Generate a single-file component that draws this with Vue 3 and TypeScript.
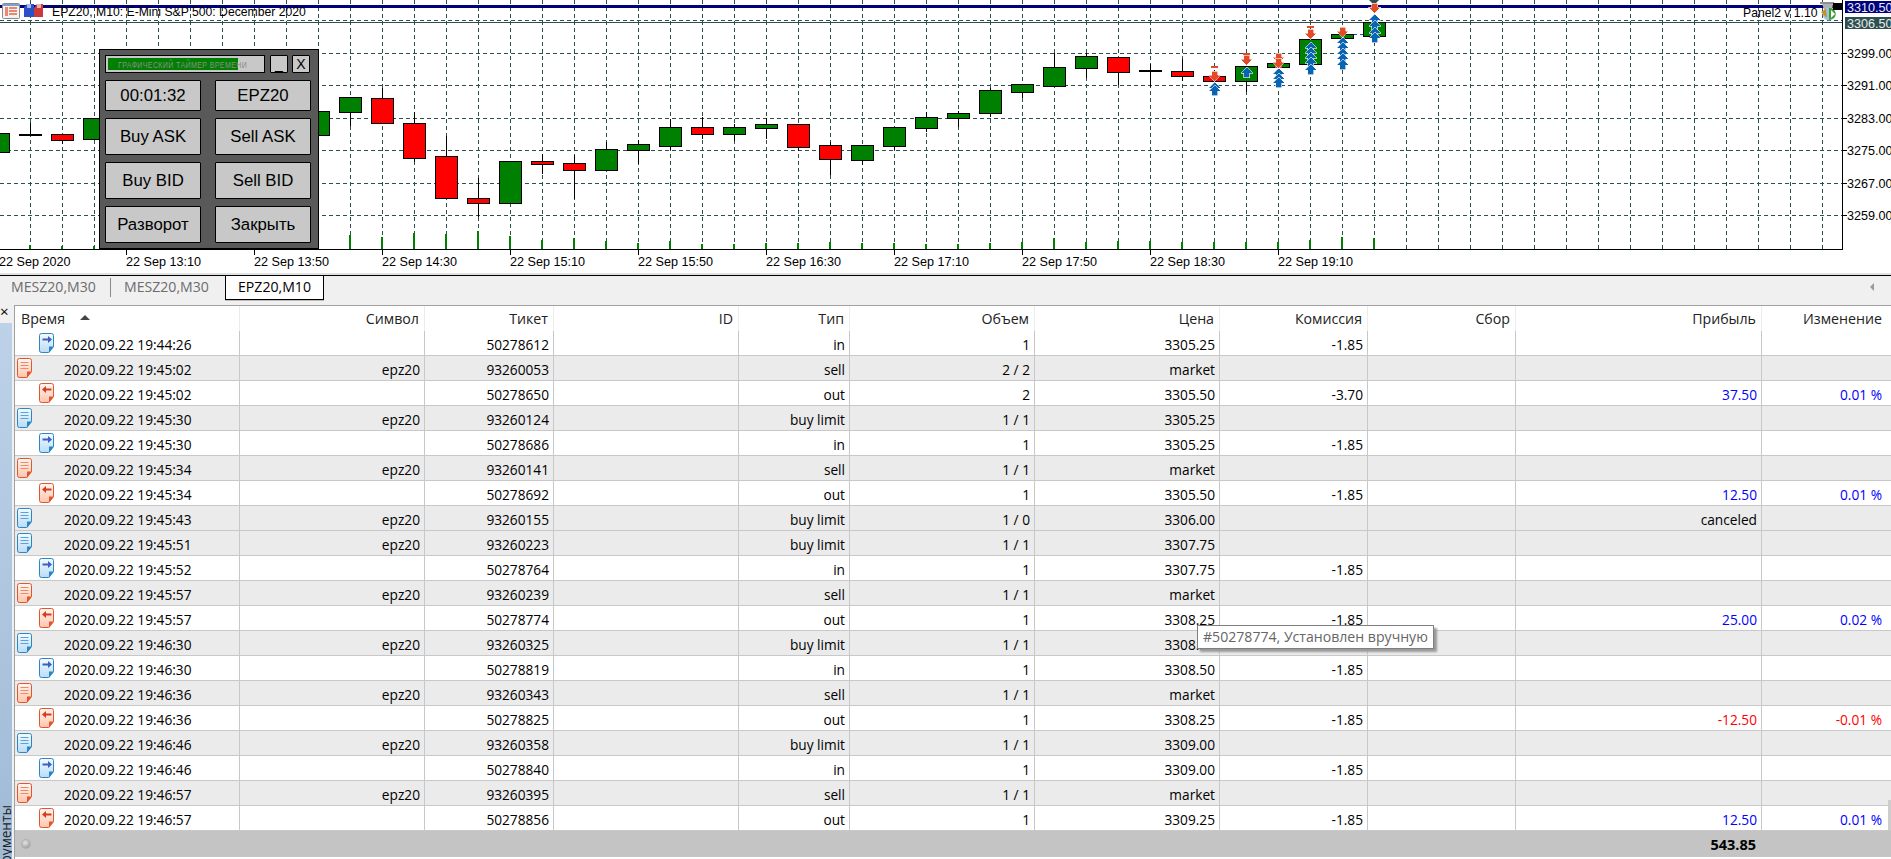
<script setup lang="ts">
type Row = {
  kind: 'in' | 'out' | 'buy' | 'sell'
  time: string
  sym?: string
  ticket: string
  type: string
  vol: string
  price: string
  fee?: string
  profit?: string
  change?: string
  tone?: 'pos' | 'neg'
}

const columns = ['Символ', 'Тикет', 'ID', 'Тип', 'Объем', 'Цена', 'Комиссия', 'Сбор', 'Прибыль', 'Изменение']

const rows: Row[] = [
  { kind: 'in', time: '19:44:26', ticket: '50278612', type: 'in', vol: '1', price: '3305.25', fee: '-1.85' },
  { kind: 'sell', time: '19:45:02', sym: 'epz20', ticket: '93260053', type: 'sell', vol: '2 / 2', price: 'market' },
  { kind: 'out', time: '19:45:02', ticket: '50278650', type: 'out', vol: '2', price: '3305.50', fee: '-3.70', profit: '37.50', change: '0.01 %', tone: 'pos' },
  { kind: 'buy', time: '19:45:30', sym: 'epz20', ticket: '93260124', type: 'buy limit', vol: '1 / 1', price: '3305.25' },
  { kind: 'in', time: '19:45:30', ticket: '50278686', type: 'in', vol: '1', price: '3305.25', fee: '-1.85' },
  { kind: 'sell', time: '19:45:34', sym: 'epz20', ticket: '93260141', type: 'sell', vol: '1 / 1', price: 'market' },
  { kind: 'out', time: '19:45:34', ticket: '50278692', type: 'out', vol: '1', price: '3305.50', fee: '-1.85', profit: '12.50', change: '0.01 %', tone: 'pos' },
  { kind: 'buy', time: '19:45:43', sym: 'epz20', ticket: '93260155', type: 'buy limit', vol: '1 / 0', price: '3306.00', profit: 'canceled' },
  { kind: 'buy', time: '19:45:51', sym: 'epz20', ticket: '93260223', type: 'buy limit', vol: '1 / 1', price: '3307.75' },
  { kind: 'in', time: '19:45:52', ticket: '50278764', type: 'in', vol: '1', price: '3307.75', fee: '-1.85' },
  { kind: 'sell', time: '19:45:57', sym: 'epz20', ticket: '93260239', type: 'sell', vol: '1 / 1', price: 'market' },
  { kind: 'out', time: '19:45:57', ticket: '50278774', type: 'out', vol: '1', price: '3308.25', fee: '-1.85', profit: '25.00', change: '0.02 %', tone: 'pos' },
  { kind: 'buy', time: '19:46:30', sym: 'epz20', ticket: '93260325', type: 'buy limit', vol: '1 / 1', price: '3308.50' },
  { kind: 'in', time: '19:46:30', ticket: '50278819', type: 'in', vol: '1', price: '3308.50', fee: '-1.85' },
  { kind: 'sell', time: '19:46:36', sym: 'epz20', ticket: '93260343', type: 'sell', vol: '1 / 1', price: 'market' },
  { kind: 'out', time: '19:46:36', ticket: '50278825', type: 'out', vol: '1', price: '3308.25', fee: '-1.85', profit: '-12.50', change: '-0.01 %', tone: 'neg' },
  { kind: 'buy', time: '19:46:46', sym: 'epz20', ticket: '93260358', type: 'buy limit', vol: '1 / 1', price: '3309.00' },
  { kind: 'in', time: '19:46:46', ticket: '50278840', type: 'in', vol: '1', price: '3309.00', fee: '-1.85' },
  { kind: 'sell', time: '19:46:57', sym: 'epz20', ticket: '93260395', type: 'sell', vol: '1 / 1', price: 'market' },
  { kind: 'out', time: '19:46:57', ticket: '50278856', type: 'out', vol: '1', price: '3309.25', fee: '-1.85', profit: '12.50', change: '0.01 %', tone: 'pos' },
]

const gridX = Array.from({ length: 57 }, (_, i) => 30 + 32 * i)
const gridY = [53, 85, 118, 150, 183, 215]

// k, body top, body bottom, wick top, wick bottom, colour
const candleData: [number, number, number, number, number, string][] = [
  [-1, 133, 152, 133, 152, 'g'], [0, 134, 136, 123, 136, 'd'], [1, 134, 140, 134, 144, 'r'], [2, 118, 139, 118, 139, 'g'],
  [9, 111, 135, 111, 135, 'g'], [10, 97, 112, 97, 126, 'g'], [11, 98, 123, 88, 123, 'r'], [12, 123, 158, 112, 162, 'r'],
  [13, 156, 198, 136, 198, 'r'], [14, 198, 203, 178, 217, 'r'], [15, 161, 203, 161, 203, 'g'], [16, 161, 164, 154, 174, 'r'],
  [17, 163, 170, 155, 199, 'r'], [18, 149, 170, 142, 170, 'g'], [19, 144, 150, 140, 164, 'g'], [20, 127, 146, 119, 150, 'g'],
  [21, 127, 134, 117, 139, 'r'], [22, 127, 134, 124, 141, 'g'], [23, 124, 128, 118, 139, 'g'], [24, 124, 147, 124, 151, 'r'],
  [25, 145, 159, 142, 175, 'r'], [26, 145, 160, 145, 165, 'g'], [27, 127, 146, 127, 150, 'g'], [28, 117, 128, 112, 132, 'g'],
  [29, 113, 118, 111, 127, 'g'], [30, 90, 113, 88, 117, 'g'], [31, 84, 92, 84, 98, 'g'], [32, 67, 86, 53, 86, 'g'],
  [33, 56, 68, 53, 78, 'g'], [34, 57, 72, 57, 85, 'r'], [35, 70, 72, 64, 87, 'd'], [36, 71, 76, 59, 81, 'r'],
  [37, 76, 81, 70, 84, 'r'], [38, 66, 81, 66, 92, 'g'], [39, 63, 67, 60, 70, 'g'], [40, 39, 64, 39, 64, 'g'],
  [41, 34, 38, 30, 40, 'g'], [42, 22, 36, 22, 36, 'g'],
]
const candles = candleData.map(([k, top, bottom, wickTop, wickBottom, color]) => ({
  x: 30 + 32 * k,
  top,
  h: bottom - top,
  wickTop,
  wickBottom,
  fill: color === 'g' ? '#008000' : color === 'r' ? '#ff0000' : '#000',
}))

const volumeTops = [245, 246, 246, -1, -1, -1, -1, -1, -1, -1, 235, 237, 233, 234, 231, 236, 240, 238, 241, 243, 241, 244, 244, 243, 243, 242, 243, 243, 244, 244, 243, 242, 238, 242, 241, 241, 242, 242, 242, 242, 240, 237, 238]
const volumes = volumeTops
  .map((top, k) => ({ x: 30 + 32 * k, top }))
  .filter((v) => v.top > 0)

const timeLabels = [
  { x: -1, t: '22 Sep 2020', tick: false },
  { x: 126, t: '22 Sep 13:10', tick: true },
  { x: 254, t: '22 Sep 13:50', tick: true },
  { x: 382, t: '22 Sep 14:30', tick: true },
  { x: 510, t: '22 Sep 15:10', tick: true },
  { x: 638, t: '22 Sep 15:50', tick: true },
  { x: 766, t: '22 Sep 16:30', tick: true },
  { x: 894, t: '22 Sep 17:10', tick: true },
  { x: 1022, t: '22 Sep 17:50', tick: true },
  { x: 1150, t: '22 Sep 18:30', tick: true },
  { x: 1278, t: '22 Sep 19:10', tick: true },
]
const priceLabels = [
  { y: 53, t: '3299.00' }, { y: 85, t: '3291.00' }, { y: 118, t: '3283.00' },
  { y: 150, t: '3275.00' }, { y: 183, t: '3267.00' }, { y: 215, t: '3259.00' },
]

const redArrows: [number, number][] = [
  [1214, 71], [1246, 55], [1278, 53], [1278, 58], [1310, 29], [1342, 27], [1374, 3],
]
const blueArrows: [number, number][] = [
  [1214, 82], [1214, 85], [1246, 67], [1278, 68], [1278, 73], [1278, 77],
  [1310, 42], [1310, 47], [1310, 52], [1310, 57], [1310, 64], [1342, 37], [1342, 42], [1342, 48], [1342, 53], [1342, 59],
  [1374, 14], [1374, 20], [1374, 27], [1374, 32],
]
const redHats: [number, number][] = [[1214, 66], [1246, 53], [1310, 26], [1278, 62], [1278, 66]]
const downPts = '-3,0 3,0 3,4 6,4 0,10.5 -6,4 -3,4'
const upPts = '-3,10.5 3,10.5 3,6 6,6 0,0 -6,6 -3,6'
</script>

<template>
  <div class="page">
    <div class="chart">
      <svg class="plot" width="1891" height="273" viewBox="0 0 1891 273">
        <defs>
          <linearGradient id="sheet-blue" x1="0" y1="0" x2="0" y2="1">
            <stop offset="0" stop-color="#f4faff" />
            <stop offset="1" stop-color="#b9dcf7" />
          </linearGradient>
          <linearGradient id="sheet-red" x1="0" y1="0" x2="0" y2="1">
            <stop offset="0" stop-color="#fff6f2" />
            <stop offset="1" stop-color="#ffc4ac" />
          </linearGradient>
        </defs>
        <g class="grid">
          <line v-for="x in gridX" :key="x" :x1="x + 0.5" :x2="x + 0.5" y1="0" y2="249" />
          <line v-for="y in gridY" :key="y" x1="0" x2="1842" :y1="y + 0.5" :y2="y + 0.5" />
          <line x1="0" x2="1842" y1="20.5" y2="20.5" />
        </g>
        <rect x="0" y="22" width="1842" height="1" fill="#2f4f4f" />
        <rect x="0" y="5" width="1842" height="3" fill="#000080" />

        <g v-for="v in volumes" :key="v.x">
          <rect :x="v.x - 1" :y="v.top" width="2" :height="249 - v.top" fill="#008000" />
        </g>

        <g v-for="c in candles" :key="c.x">
          <line class="wick" :x1="c.x + 0.5" :x2="c.x + 0.5" :y1="c.wickTop" :y2="c.wickBottom" />
          <rect v-if="c.fill !== '#000'" class="body" :x="c.x - 10.5" :y="c.top + 0.5" width="22" :height="c.h" :fill="c.fill" />
          <rect v-else :x="c.x - 11" :y="c.top" width="23" height="2" fill="#000" />
        </g>

        <line x1="1354" x2="1366" y1="34.5" y2="34.5" stroke="#0a64b4" stroke-dasharray="3 3" />
        <polygon points="1369,0 1379,0 1374,5" fill="#2f4f4f" />
        <rect v-for="h in redHats" :key="h[0] + '-' + h[1]" :x="h[0] - 3" :y="h[1]" width="7" height="2" fill="#e44a26" />
        <g v-for="a in blueArrows" :key="'b' + a[0] + a[1]" :transform="`translate(${a[0] + 0.5} ${a[1]})`">
          <polygon class="arrow" :points="upPts" fill="#0a64b4" />
        </g>
        <g v-for="a in redArrows" :key="'r' + a[0] + a[1]" :transform="`translate(${a[0] + 0.5} ${a[1]})`">
          <polygon class="arrow" :points="downPts" fill="#e44a26" />
        </g>

        <rect x="0" y="249" width="1843" height="1" fill="#000" />
        <rect x="1842" y="0" width="1" height="250" fill="#000" />

        <g v-for="l in timeLabels" :key="l.t">
          <rect v-if="l.tick" :x="l.x" y="250" width="1" height="5" fill="#000" />
          <text class="axis" :x="l.x" y="266">{{ l.t }}</text>
        </g>
        <g v-for="p in priceLabels" :key="p.t">
          <rect x="1843" :y="p.y" width="4" height="1" fill="#000" />
          <text class="axis" x="1847" :y="p.y + 5">{{ p.t }}</text>
        </g>

        <rect x="1845" y="1" width="46" height="12" fill="#000080" />
        <text class="axis light" x="1847" y="12">3310.50</text>
        <rect x="1845" y="17" width="46" height="12" fill="#2f4f4f" />
        <text class="axis light" x="1847" y="28">3306.50</text>

        <text class="axis small" x="52" y="16">EPZ20, M10:  E-Mini S&amp;P 500: December 2020</text>
        <text class="axis small" x="1743" y="17">Panel2 v 1.10</text>

        <!-- window icons, top left -->
        <g>
          <rect x="2.5" y="3.5" width="17" height="15" rx="1" fill="#f2f2f2" stroke="#8a8a8a" />
          <rect x="3" y="4" width="16" height="2" fill="#7f9fd0" />
          <rect x="5" y="7" width="3" height="9" fill="#e88a70" />
          <rect x="9" y="7" width="8" height="2" fill="#e88a70" />
          <rect x="9" y="10" width="8" height="2" fill="#e88a70" />
          <rect x="9" y="13" width="8" height="2" fill="#e88a70" />
          <path d="M24 7 L27 4 H34 V17 H24 Z" fill="#2a50c8" />
          <rect x="27" y="4" width="4" height="4" fill="#a9b8e8" />
          <path d="M34 8 L37 4 H43 V17 H34 Z" fill="#c83a3a" />
          <rect x="37" y="4" width="4" height="4" fill="#e8b0b0" />
        </g>

        <!-- expert icon, top right -->
        <g>
          <path d="M1822 3 H1833 L1832 10 H1824 Z" fill="#b0b0b0" />
          <rect x="1820" y="2" width="14" height="2" fill="#909090" />
          <circle cx="1829" cy="14" r="6.5" fill="#9cc4e8" />
          <path d="M1829 8 A6 6 0 0 1 1834 18 L1829 20 Z" fill="#3aa02a" />
          <path d="M1821 12 L1826 9 L1827 18 Z" fill="#c89020" />
          <path d="M1831 10 L1835 14 L1831 18 Z" fill="#fff" />
          <rect x="1833" y="3" width="9" height="7" fill="#000" />
        </g>
      </svg>

      <section class="panel">
        <div class="panel-top">
          <div class="timer">
            <span class="timer-fill"></span>
            <span class="timer-text">ГРАФИЧЕСКИЙ ТАЙМЕР ВРЕМЕНИ</span>
          </div>
          <button class="btn mini">_</button>
          <button class="btn mini">X</button>
        </div>
        <div class="panel-grid">
          <button class="btn">00:01:32</button>
          <button class="btn">EPZ20</button>
          <button class="btn">Buy ASK</button>
          <button class="btn">Sell ASK</button>
          <button class="btn">Buy BID</button>
          <button class="btn">Sell BID</button>
          <button class="btn">Разворот</button>
          <button class="btn">Закрыть</button>
        </div>
      </section>
    </div>

    <div class="tabs">
      <div class="tab">MESZ20,M30</div>
      <div class="tab-sep"></div>
      <div class="tab second">MESZ20,M30</div>
      <div class="tab active">EPZ20,M10</div>
      <span class="tab-scroll"></span>
    </div>

    <div class="main">
      <aside class="side">
        <div class="side-close">×</div>
        <div class="side-bar"><span class="side-label">Инструменты</span></div>
      </aside>

      <div class="table">
        <div class="tr head">
          <div class="td first-head">Время<span class="sort"></span></div>
          <div v-for="c in columns" :key="c" class="td">{{ c }}</div>
        </div>

        <div v-for="(r, i) in rows" :key="i" class="tr" :class="{ order: r.kind === 'buy' || r.kind === 'sell' }">
          <div class="td time">
            <span class="slot" :class="{ deep: r.kind === 'in' || r.kind === 'out' }">
              <svg class="doc" width="16" height="20" viewBox="0 0 16 20" :class="r.kind === 'in' || r.kind === 'buy' ? 'blue' : 'red'">
                <path class="sheet" d="M2.5 .5H12.5Q14.5 .5 14.5 2.5V13.5L9.5 19.5H2.5Q.5 19.5 .5 17.5V2.5Q.5 .5 2.5 .5Z" />
                <path class="fold" d="M15 13.5H10V20Z" />
                <path v-if="r.kind === 'buy' || r.kind === 'sell'" class="ln" d="M3.5 4.5H11.5M3.5 7.5H11.5M3.5 10.5H11.5" />
                <path v-else-if="r.kind === 'in'" class="arr" d="M3.5 5.5H9V3L13 6.5L9 10V7.5H3.5Z" />
                <path v-else class="arr" d="M12.5 5.5H7V3L3 6.5L7 10V7.5H12.5Z" />
              </svg>
            </span>
            2020.09.22 {{ r.time }}
          </div>
          <div class="td">{{ r.sym }}</div>
          <div class="td">{{ r.ticket }}</div>
          <div class="td"></div>
          <div class="td">{{ r.type }}</div>
          <div class="td">{{ r.vol }}</div>
          <div class="td">{{ r.price }}</div>
          <div class="td">{{ r.fee }}</div>
          <div class="td"></div>
          <div class="td" :class="r.tone">{{ r.profit }}</div>
          <div class="td" :class="r.tone">{{ r.change }}</div>
        </div>

        <div class="foot">
          <span class="dot"></span>
          <strong class="total">543.85</strong>
        </div>

        <span class="thumb"></span>
        <div class="tooltip">#50278774, Установлен вручную</div>
      </div>
    </div>
  </div>
</template>

<style>
html, body { margin: 0; background: #fff; overflow: hidden; }
</style>

<style scoped>
.page {
  width: 1891px;
  height: 859px;
  overflow: hidden;
  display: flex;
  flex-direction: column;
  font-family: "Open Sans", "Noto Sans", sans-serif;
  background: #fff;
}
.chart {
  position: relative;
  height: 273px;
  border-bottom: 2px solid #e2e2e2;
  flex: none;
}
.plot { display: block; }
.grid line { stroke: #2f4f4f; stroke-width: 1; stroke-dasharray: 4 3; shape-rendering: crispEdges; }
.wick { stroke: #000; stroke-width: 1; shape-rendering: crispEdges; }
.body { stroke: #000; stroke-width: 1; shape-rendering: crispEdges; }
.arrow { stroke: #fff; stroke-width: 0.6; shape-rendering: crispEdges; }
.axis { font-family: "Liberation Sans", sans-serif; font-size: 12.6px; fill: #000; white-space: pre; }
.axis.small { font-size: 12.2px; }
.axis.light { fill: #e4ecec; }

.panel {
  position: absolute;
  left: 99px;
  top: 49px;
  width: 220px;
  height: 200px;
  box-sizing: border-box;
  background: #595959;
  border: 1px solid #000;
  padding: 5px 7px 6px 5px;
  display: flex;
  flex-direction: column;
  gap: 7px;
}
.panel-top { display: flex; height: 18px; gap: 4px; flex: none; }
.timer {
  position: relative;
  width: 160px;
  margin-right: 1px;
  box-sizing: border-box;
  border: 1px solid #000;
  background: #c8c8c8;
  display: flex;
  align-items: center;
  overflow: hidden;
}
.timer-fill { position: absolute; left: 2px; top: 2px; bottom: 2px; width: 130px; background: #008000; }
.timer-text {
  position: relative;
  display: inline-block;
  margin-left: 12px;
  font: 7px "Liberation Sans", sans-serif;
  letter-spacing: 0.4px;
  color: #8c8c8c;
  white-space: nowrap;
  transform: scaleY(1.4);
}
.btn {
  box-sizing: border-box;
  margin: 0;
  padding: 0;
  border: 1px solid #000;
  border-radius: 1px;
  background: #c8c8c8;
  color: #000;
  font: 16.8px "Liberation Sans", sans-serif;
}
.mini { width: 18px; font-size: 14px; }
.panel-grid {
  flex: 1;
  display: grid;
  grid-template-columns: 96px 96px;
  grid-template-rows: 31px 37px 37px 37px;
  column-gap: 14px;
  row-gap: 7px;
}

.tabs {
  flex: none;
  height: 30px;
  box-sizing: border-box;
  background: #f0f0f0;
  border-top: 1px solid #000;
  display: flex;
  align-items: flex-start;
  position: relative;
  font-size: 14.1px;
}
.tab { box-sizing: border-box; width: 110px; height: 23px; line-height: 22px; padding-left: 11px; color: #6d6d6d; white-space: nowrap; }
.tab-sep { width: 1px; height: 19px; margin-top: 2px; background: #8a8a8a; }
.tab.second { width: 114px; padding-left: 13px; }
.tab.active {
  width: 99px;
  height: 24px;
  padding: 0;
  text-align: center;
  background: #fff;
  color: #000;
  border: 1px solid #000;
  border-top: none;
  box-shadow: 0 1px 0 #bbb;
}
.tab-scroll {
  position: absolute;
  right: 17px;
  top: 7px;
  border: 4px solid transparent;
  border-right: 4px solid #9a9a9a;
  border-left: none;
}

.main { flex: 1; display: flex; min-height: 0; }
.side { width: 14px; flex: none; display: flex; flex-direction: column; background: #f0f0f0; }
.side-close { height: 18px; font-size: 15px; line-height: 13px; color: #000; }
.side-bar {
  flex: 1;
  width: 12px;
  background: linear-gradient(#bdd2e8, #a0bad6);
  overflow: hidden;
  position: relative;
}
.side-label {
  position: absolute;
  left: 0;
  top: 482px;
  writing-mode: vertical-rl;
  transform: rotate(180deg);
  font-size: 13.7px;
  line-height: 12px;
  width: 12px;
  white-space: nowrap;
  color: #222;
}

.table {
  flex: 1;
  position: relative;
  min-width: 0;
  box-sizing: border-box;
  border-top: 1px solid #a0a0a0;
  border-left: 1px solid #a0a0a0;
  font-size: 13.7px;
  color: #000;
}
.tr {
  display: grid;
  grid-template-columns: 225px 185px 129px 185px 111px 185px 185px 148px 148px 246px 1fr;
  height: 25px;
  box-sizing: border-box;
  border-bottom: 1px solid #c8c8c8;
  background: #fff;
}
.tr.order { background: #ebebeb; }
.tr.head { border-bottom: none; color: #222; font-size: 14.2px; }
.td {
  box-sizing: border-box;
  padding-right: 4px;
  border-right: 1px solid #c8c8c8;
  text-align: right;
  line-height: 27px;
  white-space: nowrap;
  overflow: hidden;
}
.td:last-child { border-right: none; padding-right: 9px; }
.head .td { border-right-color: #ececec; line-height: 26px; padding-right: 5px; }
.head .td:last-child { padding-right: 9px; }
.first-head { text-align: left; padding-left: 6px; display: flex; align-items: center; }
.sort {
  margin-left: 15px;
  margin-top: -3px;
  border-left: 5px solid transparent;
  border-right: 5px solid transparent;
  border-bottom: 5px solid #444;
}
.time { text-align: left; display: flex; align-items: center; padding: 2px 0 0; }
.slot { width: 49px; height: 24px; margin-top: -2px; box-sizing: border-box; padding: 2px 0 0 2px; flex: none; display: block; }
.slot.deep { padding-left: 24px; }
.doc { display: block; }
.sheet { stroke-width: 1; }
.blue .sheet { fill: url(#sheet-blue); stroke: #2b86c5; }
.blue .fold { fill: #2b86c5; }
.blue .ln { stroke: #5aa2dc; fill: none; }
.blue .arr { fill: #3b5fc4; }
.red .sheet { fill: url(#sheet-red); stroke: #e2562c; }
.red .fold { fill: #e2562c; }
.red .ln { stroke: #ee8a68; fill: none; }
.red .arr { fill: #d83a1c; }
.pos { color: #0000ff; }
.neg { color: #ff0000; }

.foot {
  height: 26px;
  background: #c4c4c4;
  display: flex;
  align-items: center;
  width: 1876px;
  position: relative;
}
.dot {
  position: absolute;
  left: 7px;
  top: 9px;
  width: 8px;
  height: 8px;
  border-radius: 50%;
  background: radial-gradient(circle at 40% 35%, #e4e4e4, #8c8c8c);
  box-shadow: 0 0 0 1px #b0b0b0;
}
.total {
  margin-left: 1501px;
  width: 240px;
  text-align: right;
  font-weight: 700;
  font-size: 14.5px;
}
.thumb {
  position: absolute;
  right: 0;
  top: 494px;
  width: 3px;
  height: 30px;
  background: #cdcdcd;
}
.tooltip {
  position: absolute;
  left: 1182px;
  top: 319px;
  width: 237px;
  height: 24px;
  box-sizing: border-box;
  background: #fff;
  border: 1px solid #808080;
  box-shadow: 3px 3px 2px #9a9a9a;
  color: #666;
  font-size: 14.1px;
  line-height: 22px;
  padding-left: 5px;
  white-space: nowrap;
}
</style>
